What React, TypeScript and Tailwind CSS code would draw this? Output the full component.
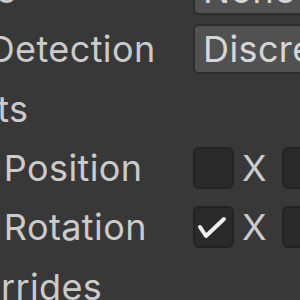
function Toggle({ on }: { on?: boolean }) {
  return (
    <div className="relative h-[42px] w-[41px] shrink-0 rounded-[6px] border-2 border-[#232323] bg-[#2a2a2a]">
      {on && (
        <svg viewBox="0 0 41 42" className="absolute -left-[2px] -top-[2px] h-[42px] w-[41px]">
          <path d="M7 21 L13 30 L31 13" fill="none" stroke="#f0f0f0" strokeWidth="4" strokeLinecap="round" strokeLinejoin="round" />
        </svg>
      )}
    </div>
  )
}

function Popup({ value }: { value: string }) {
  return (
    <div className="flex h-[50px] w-[200px] shrink-0 items-center rounded-[6px] border-2 border-[#2e2e2e] bg-[#515151] pl-[8px] text-[#d6d6d6]">
      {value}
    </div>
  )
}

function Row({ label, pad, children }: { label: string; pad: string; children?: React.ReactNode }) {
  return (
    <div className="flex h-[59.3px] shrink-0 items-center">
      <div className={"w-[363px] shrink-0 whitespace-nowrap " + pad}>{label}</div>
      {children}
    </div>
  )
}

export default function App() {
  return (
    <div className="h-[300px] w-[300px] overflow-hidden bg-[#383838] font-['Inter',sans-serif] text-[36px] leading-none tracking-[0.4px] text-[#cbcbcb]">
      <div className="ml-[-170px] mt-[-39.5px] flex flex-col">
        <Row label="Interpolate" pad="pl-[0px]">
          <Popup value="None" />
        </Row>
        <Row label="Collision Detection" pad="pl-[0px]">
          <Popup value="Discrete" />
        </Row>
        <Row label="Constraints" pad="pl-[0px]" />
        <Row label="Freeze Position" pad="pl-[46px]">
          <div className="flex items-center">
            <Toggle />
            <span className="ml-[8px] mr-[15px]">X</span>
            <Toggle />
          </div>
        </Row>
        <Row label="Freeze Rotation" pad="pl-[46px]">
          <div className="flex items-center">
            <Toggle on />
            <span className="ml-[8px] mr-[15px]">X</span>
            <Toggle />
          </div>
        </Row>
        <Row label="Layer Overrides" pad="pl-[0px] -ml-[5px]" />
      </div>
    </div>
  )
}
